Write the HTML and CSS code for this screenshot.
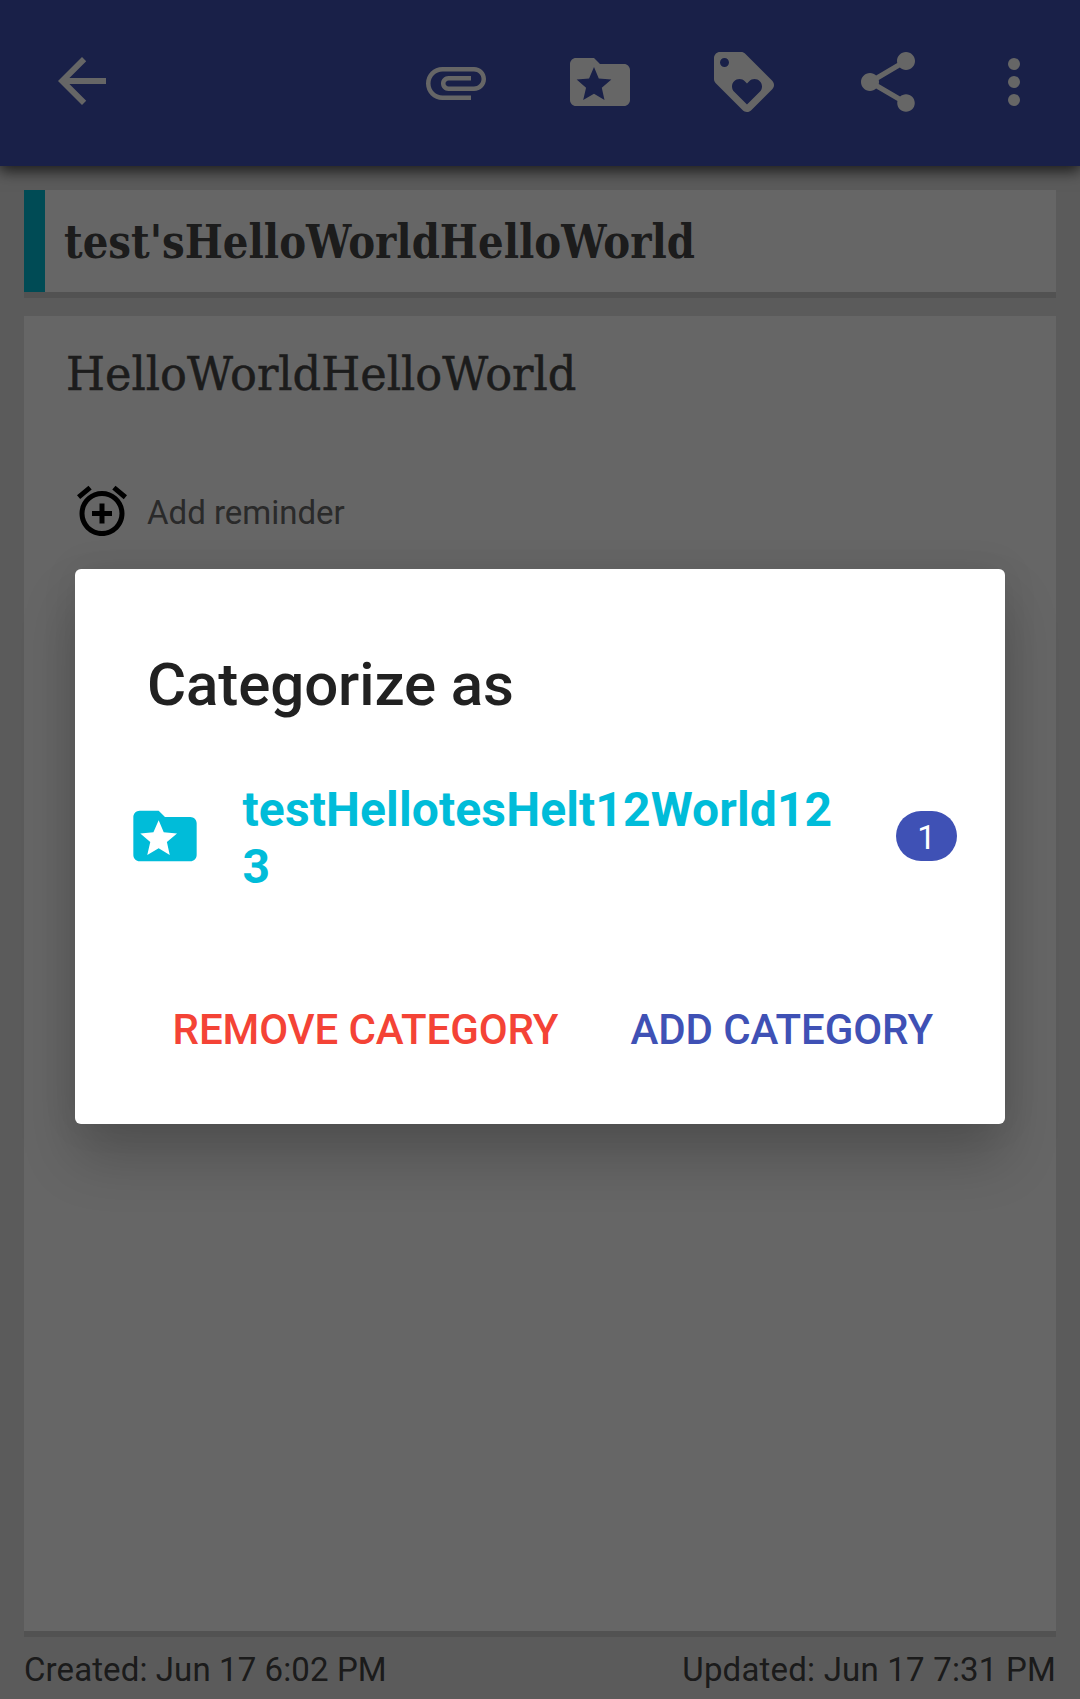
FILE: index.html
```html
<!DOCTYPE html>
<html lang="en">
<head>
<meta charset="utf-8">
<title>Note</title>
<link rel="stylesheet" href="styles.css">
</head>
<body>
<div class="screen">
  <header class="toolbar">
    <svg class="icon back" viewBox="0 0 24 24"><path d="M20 11H7.8l5.6-5.6L12 4l-8 8 8 8 1.4-1.4L7.8 13H20z"/></svg>
    <div class="actions">
      <svg class="icon" viewBox="0 0 24 24"><path d="M7.5 18C4.46 18 2 15.54 2 12.5S4.46 7 7.5 7H18c2.21 0 4 1.79 4 4s-1.79 4-4 4H9.5C8.12 15 7 13.88 7 12.5S8.12 10 9.5 10H17v1.5H9.5c-.55 0-1 .45-1 1s.45 1 1 1H18c1.38 0 2.5-1.12 2.5-2.5S19.38 8.5 18 8.5H7.5c-2.21 0-4 1.79-4 4s1.79 4 4 4H17V18z"/></svg>
      <svg class="icon" viewBox="0 0 24 24"><path fill-rule="evenodd" d="M20 6h-8l-2-2H4c-1.1 0-2 .9-2 2v12c0 1.1.9 2 2 2h16c1.1 0 2-.9 2-2V8c0-1.100-.9-2-2-2zM13.500 18 10 15.900 6.400 18 7.350 13.900 4.200 11.200 8.350 10.850 10 7 11.600 10.850 15.800 11.200 12.600 13.900z"/></svg>
      <svg class="icon" viewBox="0 0 24 24"><path d="M21.410 11.580l-9-9C12.050 2.220 11.550 2 11 2H4c-1.100 0-2 .9-2 2v7c0 .55.220 1.050.590 1.420l9 9c.36.36.86.58 1.410.58s1.050-.22 1.410-.59l7-7c.37-.36.590-.86.590-1.410s-.23-1.060-.59-1.420zM5.500 7C4.670 7 4 6.330 4 5.500S4.670 4 5.500 4 7 4.670 7 5.500 6.330 7 5.500 7zm11.770 8.270L13 19.540l-4.270-4.270C8.280 14.810 8 14.190 8 13.500c0-1.380 1.120-2.500 2.500-2.500.69 0 1.320.28 1.770.74l.73.72.73-.73c.45-.45 1.080-.73 1.770-.73 1.380 0 2.500 1.120 2.500 2.500 0 .69-.28 1.320-.73 1.770z"/></svg>
      <svg class="icon" viewBox="0 0 24 24"><path d="M18 16.080c-.76 0-1.440.3-1.960.77L8.910 12.700c.05-.23.090-.46.090-.7s-.04-.47-.09-.7l7.050-4.110c.54.5 1.250.81 2.040.81 1.660 0 3-1.340 3-3s-1.340-3-3-3-3 1.340-3 3c0 .24.040.47.090.7L8.040 9.810C7.500 9.310 6.790 9 6 9c-1.660 0-3 1.340-3 3s1.340 3 3 3c.79 0 1.500-.31 2.040-.81l7.120 4.160c-.05.21-.08.43-.08.65 0 1.610 1.310 2.920 2.920 2.920s2.920-1.310 2.920-2.920-1.310-2.920-2.920-2.920z"/></svg>
    </div>
    <svg class="icon more" viewBox="0 0 24 24"><circle cx="12" cy="6" r="2"/><circle cx="12" cy="12" r="2"/><circle cx="12" cy="18" r="2"/></svg>
  </header>
  <main class="note">
    <section class="card title-card"><h1 class="slab note-title">test'sHelloWorldHelloWorld</h1></section>
    <section class="card body-card">
      <p class="slab note-text">HelloWorldHelloWorld</p>
      <div class="reminder">
        <svg class="alarm" viewBox="0 0 24 24"><path d="M7.880 3.390L6.600 1.860 2 5.710l1.290 1.530 4.590-3.850zM22 5.720l-4.600-3.860-1.290 1.530 4.600 3.860L22 5.720zM12 4c-4.970 0-9 4.030-9 9s4.020 9 9 9c4.970 0 9-4.030 9-9s-4.030-9-9-9zm0 16c-3.870 0-7-3.130-7-7s3.130-7 7-7 7 3.130 7 7-3.130 7-7 7zm1-11h-2v3H8v2h3v3h2v-3h3v-2h-3V9z"/></svg>
        <span class="reminder-label">Add reminder</span>
      </div>
    </section>
  </main>
  <footer class="dates"><span>Created: Jun 17 6:02 PM</span><span class="updated">Updated: Jun 17 7:31 PM</span></footer>
</div>
<div class="scrim">
  <div class="dialog" role="dialog" aria-label="Categorize as">
    <h2 class="dialog-title">Categorize as</h2>
    <div class="category">
      <svg class="folder" viewBox="0 0 24 24"><path fill-rule="evenodd" d="M20 6h-8l-2-2H4c-1.100 0-2 .9-2 2v12c0 1.100.9 2 2 2h16c1.100 0 2-.9 2-2V8c0-1.100-.9-2-2-2zM13.500 18 10 15.900 6.400 18 7.350 13.900 4.200 11.200 8.350 10.850 10 7 11.600 10.850 15.800 11.200 12.600 13.900z"/></svg>
      <span class="category-name">testHellotesHelt12World123</span>
      <span class="count">1</span>
    </div>
    <div class="buttons">
      <button class="btn remove">REMOVE CATEGORY</button>
      <button class="btn add">ADD CATEGORY</button>
    </div>
  </div>
</div>
</body>
</html>
```
FILE: styles.css
```css
* { box-sizing: border-box; margin: 0; padding: 0; }
body { width: 1080px; height: 1699px; overflow: hidden; position: relative; font-family: Roboto, sans-serif; }
.screen { height: 1699px; display: flex; flex-direction: column; background: #e3e3e3; }

.toolbar {
  height: 166px; flex: none; display: flex; align-items: flex-start;
  padding: 46px 30px 0 46px; background: #3f51b5;
  box-shadow: 0 4px 14px 1px rgba(0, 0, 0, .7);
}
.icon { width: 72px; height: 72px; flex: none; fill: #fff; display: block; }
.back { margin-top: -1px; }
.actions { display: flex; gap: 72px; margin-left: auto; margin-right: 54px; }

.note { flex: 1; display: flex; flex-direction: column; gap: 24px; padding: 24px 24px 6px; }
.card { background: #fff; box-shadow: 0 6px 0 #cecece; }
.title-card { height: 102px; border-left: 21px solid #00bcd4; padding: 20px 0 0 19px; }
.body-card { flex: 1; padding: 26px 42px 0; }
.slab { font-family: "Roboto Slab", "DejaVu Serif", serif; color: #464646; line-height: 64px; white-space: nowrap; transform-origin: 0 0; width: max-content; }
.note-title { font-size: 46.6px; font-weight: 700; transform: scaleX(.866); }
.note-text { font-size: 46.6px; transform: scaleX(.96); -webkit-text-stroke: .5px #464646; }
.reminder { display: flex; align-items: center; gap: 15px; height: 60px; margin: 75px 0 0 6px; font-size: 33px; color: #696969; }
.reminder-label { line-height: 56px; padding-top: 3px; }
.alarm { width: 60px; height: 60px; }

.dates { height: 62px; flex: none; display: flex; justify-content: space-between; padding: 7px 24px 0; font-size: 33px; line-height: 52px; letter-spacing: .1px; color: #444; }
.updated { letter-spacing: .2px; }

.scrim { position: absolute; inset: 0; display: flex; justify-content: center; align-items: flex-start; padding-top: 569px; background: rgba(0, 0, 0, .6); }
.dialog { width: 930px; height: 555px; padding: 81px 48px 0 52px; border-radius: 6px; background: #fff; box-shadow: 0 34px 56px rgba(0, 0, 0, .2), 0 0 36px rgba(0, 0, 0, .08); }
.dialog-title { margin-left: 20px; font-size: 60px; line-height: 70px; font-weight: 500; letter-spacing: -.1px; color: #212121; }
.category { display: flex; align-items: flex-start; margin-top: 59px; }
.folder { width: 76px; height: 76px; flex: none; margin-top: 19px; fill: #00bcd9; }
.category-name { width: 600px; margin: 2px 0 0 39.5px; font-size: 48px; line-height: 57px; letter-spacing: .12px; font-weight: 700; color: #00bcd9; overflow-wrap: anywhere; }
.count { width: 61px; height: 50px; margin: 32px 0 0 auto; border-radius: 25px; background: #3f51b5; color: #fff; font-size: 33px; line-height: 53px; text-align: center; }
.buttons { display: flex; justify-content: flex-end; gap: 72px; margin: 105px 24px 0 0; }
.btn { border: 0; background: none; font: 500 42px/60px Roboto, sans-serif; letter-spacing: -.1px; white-space: nowrap; }
.remove { color: #f44336; }
.add { color: #3f51b5; }
```
